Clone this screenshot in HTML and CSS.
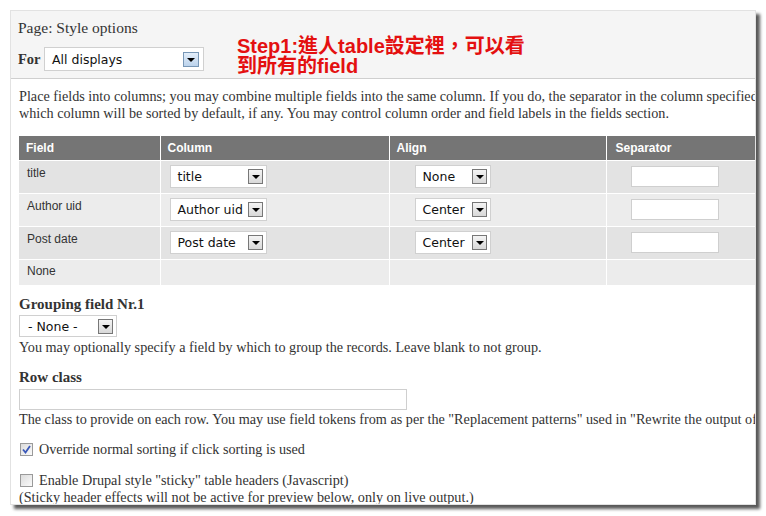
FILE: index.html
```html
<!DOCTYPE html>
<html lang="zh-TW">
<head>
  <meta charset="UTF-8">
  <title>Style options</title>
  <link rel="stylesheet" href="styles.css">
</head>
<body>

<div class="panel">
  <div class="panel-head">
    <div class="head-left">
      <div class="page-title">Page: Style options</div>
      <div class="for-row">
        <span class="for-label">For</span>
        <div class="select select-wide">
          <span class="select-text">All displays</span>
          <span class="arrow arrow-blue"></span>
        </div>
      </div>
    </div>
    <div class="note">Step1:進人table設定裡，可以看<br>到所有的field</div>
  </div>

  <div class="panel-body">
    <p class="intro">Place fields into columns; you may combine multiple fields into the same column. If you do, the separator in the column specified will be used to separate the fields. Check the sortable box to make that column click sortable, and check the default sort radio to determine<br>which column will be sorted by default, if any. You may control column order and field labels in the fields section.</p>

    <table class="fields">
      <thead>
        <tr>
          <th class="c-field">Field</th>
          <th class="c-column">Column</th>
          <th class="c-align">Align</th>
          <th class="c-sep">Separator</th>
        </tr>
      </thead>
      <tbody>
        <tr>
          <td class="c-field">title</td>
          <td class="c-column"><div class="select s-col"><span class="select-text">title</span><span class="arrow"></span></div></td>
          <td class="c-align"><div class="select s-align"><span class="select-text">None</span><span class="arrow"></span></div></td>
          <td class="c-sep"><div class="text-input s-sep"></div></td>
        </tr>
        <tr>
          <td class="c-field">Author uid</td>
          <td class="c-column"><div class="select s-col"><span class="select-text">Author uid</span><span class="arrow"></span></div></td>
          <td class="c-align"><div class="select s-align"><span class="select-text">Center</span><span class="arrow"></span></div></td>
          <td class="c-sep"><div class="text-input s-sep"></div></td>
        </tr>
        <tr>
          <td class="c-field">Post date</td>
          <td class="c-column"><div class="select s-col"><span class="select-text">Post date</span><span class="arrow"></span></div></td>
          <td class="c-align"><div class="select s-align"><span class="select-text">Center</span><span class="arrow"></span></div></td>
          <td class="c-sep"><div class="text-input s-sep"></div></td>
        </tr>
        <tr class="last">
          <td class="c-field">None</td>
          <td></td>
          <td></td>
          <td></td>
        </tr>
      </tbody>
    </table>

    <div class="form-item group-item">
      <label class="item-label">Grouping field Nr.1</label>
      <div class="select s-group"><span class="select-text">- None -</span><span class="arrow"></span></div>
      <div class="help">You may optionally specify a field by which to group the records. Leave blank to not group.</div>
    </div>

    <div class="form-item row-item">
      <label class="item-label">Row class</label>
      <div class="text-input s-row"></div>
      <div class="help">The class to provide on each row. You may use field tokens from as per the "Replacement patterns" used in "Rewrite the output of this field" for all fields.</div>
    </div>

    <div class="check-item">
      <span class="checkbox checked">
        <svg width="9" height="9" viewBox="0 0 9 9"><path d="M1 4.5 L3.5 7.5 L8 1" fill="none" stroke="#3a58b8" stroke-width="1.8"/></svg>
      </span>
      <span class="check-label">Override normal sorting if click sorting is used</span>
    </div>

    <div class="check-item sticky-item">
      <span class="checkbox"></span>
      <span class="check-label">Enable Drupal style "sticky" table headers (Javascript)</span>
    </div>
    <div class="check-desc">(Sticky header effects will not be active for preview below, only on live output.)</div>
  </div>
</div>

</body>
</html>
```

FILE: styles.css
```css
body {
    margin: 0;
    padding: 10px;
    background-color: #fff;
    font-family: 'Liberation Serif', 'Noto Sans CJK TC', serif;
    font-size: 14.2px;
    color: #333;
}
.panel {
    width: 744px;
    height: 493px;
    border: 1px solid #e2e2e2;
    overflow: hidden;
    background-color: #fff;
    box-shadow: 4px 4px 3px rgba(0, 0, 0, 0.65);
}
.panel-head {
    display: flex;
    height: 67px;
    background-color: #f5f5f5;
    border-bottom: 1px solid #cfcfcf;
    padding: 0 7px;
}
.head-left {
    width: 212px;
}
.page-title {
    font-size: 15.5px;
    line-height: 18px;
    margin-top: 8px;
}
.for-row {
    display: flex;
    align-items: center;
    margin-top: 10px;
}
.for-label {
    font-weight: bold;
    font-size: 14.5px;
    width: 26px;
}
.note {
    margin-left: 7px;
    margin-top: 25px;
    font-family: 'Liberation Sans', 'Noto Sans CJK TC', sans-serif;
    font-weight: bold;
    font-size: 20px;
    line-height: 20px;
    color: #e41010;
}

/* fake selects */
.select {
    display: inline-flex;
    align-items: center;
    justify-content: space-between;
    box-sizing: border-box;
    background-color: #fff;
    border: 1px solid #d0d0d0;
    padding: 0 3px 0 7px;
    font-family: 'DejaVu Sans', Verdana, sans-serif;
    font-size: 12.5px;
    color: #111;
    white-space: nowrap;
}
.select-wide {
    width: 160px;
    height: 24px;
    padding-left: 7px;
}
.arrow {
    position: relative;
    box-sizing: border-box;
    width: 15px;
    height: 15px;
    border: 1px solid #777;
    background: linear-gradient(#f4f4f4, #d8d8d8);
    flex: none;
}
.arrow::after {
    content: '';
    position: absolute;
    left: 3px;
    top: 5px;
    border-left: 4px solid transparent;
    border-right: 4px solid transparent;
    border-top: 4px solid #000;
}
.arrow-blue {
    width: 16px;
    height: 15px;
    margin-right: 1px;
    border-color: #7897b6;
    background: linear-gradient(#e3eefa, #bcd3ec);
}
.text-input {
    box-sizing: border-box;
    background-color: #fff;
    border: 1px solid #cfcfcf;
}

.panel-body {
    padding: 0 0 0 8px;
}
.intro {
    margin: 9px 0 0;
    line-height: 17px;
    white-space: nowrap;
}

/* fields table */
.fields {
    margin-top: 14px;
    border-collapse: collapse;
    width: 760px;
    font-family: 'Liberation Sans', Arial, sans-serif;
    font-size: 12px;
    color: #333;
}
.fields th {
    background-color: #757575;
    color: #fff;
    text-align: left;
    font-weight: bold;
    height: 24px;
    padding: 0 0 0 7px;
    border-left: 1px solid #fff;
    box-sizing: border-box;
}
.fields th:first-child,
.fields td:first-child {
    border-left: none;
}
.fields td {
    background-color: #e3e3e3;
    height: 33px;
    padding: 0;
    border-left: 1px solid #fff;
    border-top: 1px solid #fff;
    box-sizing: border-box;
}
.fields tbody tr:nth-child(even) td {
    background-color: #ececec;
}
.fields td.c-field {
    vertical-align: top;
    padding: 5px 0 0 8px;
}
.fields tr.last td {
    height: 26px;
}
.fields tr.last td.c-field {
    padding-top: 4px;
}
.c-field { width: 141px; }
.c-column { width: 229px; }
.c-align { width: 217px; }
.fields th.c-sep { padding-left: 9px; }
.fields td.c-column { padding-left: 9px; }
.fields td.c-align { padding-left: 25px; }
.fields td.c-sep { padding-left: 24px; }
.s-col {
    width: 97px;
    height: 23px;
}
.s-align {
    width: 76px;
    height: 23px;
}
.s-sep {
    width: 88px;
    height: 21px;
}

/* form items */
.item-label {
    display: block;
    font-weight: bold;
    font-size: 15px;
    line-height: 17px;
}
.group-item {
    margin-top: 11px;
}
.s-group {
    width: 98px;
    height: 22px;
    margin-top: 2px;
    padding-left: 8px;
}
.help {
    margin-top: 2px;
    line-height: 17px;
    white-space: nowrap;
}
.row-item {
    margin-top: 13px;
}
.row-item .help {
    margin-top: 1px;
}
.s-row {
    width: 388px;
    height: 21px;
    margin-top: 3px;
}
.check-item {
    display: flex;
    align-items: center;
    margin-top: 13px;
    height: 17px;
}
.checkbox {
    display: inline-flex;
    align-items: center;
    justify-content: center;
    box-sizing: border-box;
    width: 13px;
    height: 13px;
    border: 1px solid #9a9a9a;
    background: linear-gradient(135deg, #dcdcdc, #fafafa);
    margin: 0 6px 0 1px;
}
.sticky-item {
    margin-top: 14px;
}
.check-desc {
    line-height: 17px;
    white-space: nowrap;
}
```
